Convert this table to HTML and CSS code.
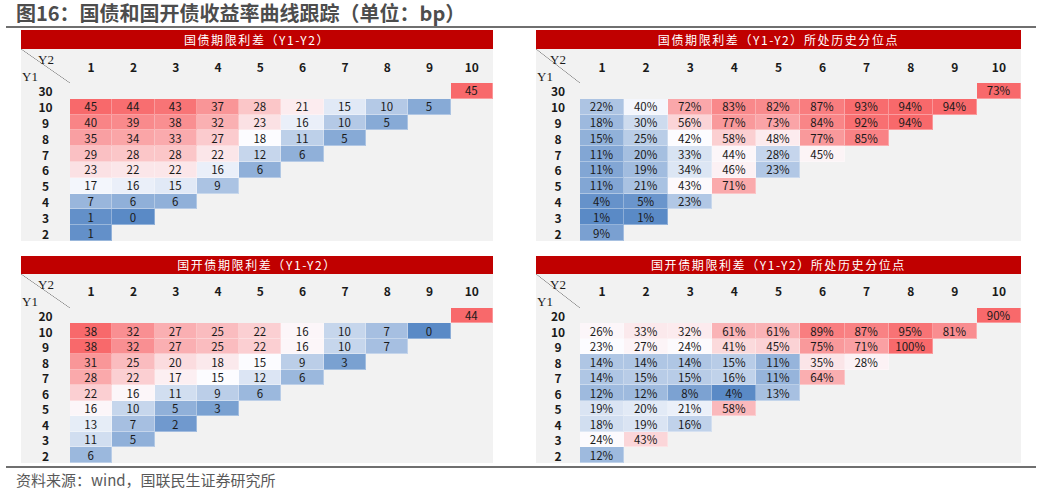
FILE: index.html
```html
<!DOCTYPE html>
<html lang="zh-CN">
<head>
<meta charset="utf-8">
<title>图16：国债和国开债收益率曲线跟踪</title>
<link rel="stylesheet" href="styles.css">
</head>
<body>
<header class="fig-title"><h1>图16：国债和国开债收益率曲线跟踪（单位：bp）</h1></header>
<main class="panels">
  <section class="panel panel-top panel-l">
    <div class="panel-head">国债期限利差（Y1-Y2）</div>
    <div class="grid">
      <div class="corner"><span class="y2">Y2</span><span class="y1">Y1</span></div>
      <div class="ch">1</div><div class="ch">2</div><div class="ch">3</div><div class="ch">4</div><div class="ch">5</div><div class="ch">6</div><div class="ch">7</div><div class="ch">8</div><div class="ch">9</div><div class="ch">10</div>
      <div class="rl">30</div><div class="c c10">45</div>
      <div class="rl">10</div><div class="c">45</div><div class="c">44</div><div class="c">43</div><div class="c">37</div><div class="c">28</div><div class="c">21</div><div class="c">15</div><div class="c">10</div><div class="c">5</div>
      <div class="rl">9</div><div class="c">40</div><div class="c">39</div><div class="c">38</div><div class="c">32</div><div class="c">23</div><div class="c">16</div><div class="c">10</div><div class="c">5</div>
      <div class="rl">8</div><div class="c">35</div><div class="c">34</div><div class="c">33</div><div class="c">27</div><div class="c">18</div><div class="c">11</div><div class="c">5</div>
      <div class="rl">7</div><div class="c">29</div><div class="c">28</div><div class="c">28</div><div class="c">22</div><div class="c">12</div><div class="c">6</div>
      <div class="rl">6</div><div class="c">23</div><div class="c">22</div><div class="c">22</div><div class="c">16</div><div class="c">6</div>
      <div class="rl">5</div><div class="c">17</div><div class="c">16</div><div class="c">15</div><div class="c">9</div>
      <div class="rl">4</div><div class="c">7</div><div class="c">6</div><div class="c">6</div>
      <div class="rl">3</div><div class="c">1</div><div class="c">0</div>
      <div class="rl">2</div><div class="c">1</div>
    </div>
  </section>

  <section class="panel panel-top panel-r">
    <div class="panel-head">国债期限利差（Y1-Y2）所处历史分位点</div>
    <div class="grid">
      <div class="corner"><span class="y2">Y2</span><span class="y1">Y1</span></div>
      <div class="ch">1</div><div class="ch">2</div><div class="ch">3</div><div class="ch">4</div><div class="ch">5</div><div class="ch">6</div><div class="ch">7</div><div class="ch">8</div><div class="ch">9</div><div class="ch">10</div>
      <div class="rl">30</div><div class="c c10">73%</div>
      <div class="rl">10</div><div class="c">22%</div><div class="c">40%</div><div class="c">72%</div><div class="c">83%</div><div class="c">82%</div><div class="c">87%</div><div class="c">93%</div><div class="c">94%</div><div class="c">94%</div>
      <div class="rl">9</div><div class="c">18%</div><div class="c">30%</div><div class="c">56%</div><div class="c">77%</div><div class="c">73%</div><div class="c">84%</div><div class="c">92%</div><div class="c">94%</div>
      <div class="rl">8</div><div class="c">15%</div><div class="c">25%</div><div class="c">42%</div><div class="c">58%</div><div class="c">48%</div><div class="c">77%</div><div class="c">85%</div>
      <div class="rl">7</div><div class="c">11%</div><div class="c">20%</div><div class="c">33%</div><div class="c">44%</div><div class="c">28%</div><div class="c">45%</div>
      <div class="rl">6</div><div class="c">11%</div><div class="c">19%</div><div class="c">34%</div><div class="c">46%</div><div class="c">23%</div>
      <div class="rl">5</div><div class="c">11%</div><div class="c">21%</div><div class="c">43%</div><div class="c">71%</div>
      <div class="rl">4</div><div class="c">4%</div><div class="c">5%</div><div class="c">23%</div>
      <div class="rl">3</div><div class="c">1%</div><div class="c">1%</div>
      <div class="rl">2</div><div class="c">9%</div>
    </div>
  </section>

  <section class="panel panel-bot panel-l">
    <div class="panel-head">国开债期限利差（Y1-Y2）</div>
    <div class="grid">
      <div class="corner"><span class="y2">Y2</span><span class="y1">Y1</span></div>
      <div class="ch">1</div><div class="ch">2</div><div class="ch">3</div><div class="ch">4</div><div class="ch">5</div><div class="ch">6</div><div class="ch">7</div><div class="ch">8</div><div class="ch">9</div><div class="ch">10</div>
      <div class="rl">20</div><div class="c c10">44</div>
      <div class="rl">10</div><div class="c">38</div><div class="c">32</div><div class="c">27</div><div class="c">25</div><div class="c">22</div><div class="c">16</div><div class="c">10</div><div class="c">7</div><div class="c">0</div>
      <div class="rl">9</div><div class="c">38</div><div class="c">32</div><div class="c">27</div><div class="c">25</div><div class="c">22</div><div class="c">16</div><div class="c">10</div><div class="c">7</div>
      <div class="rl">8</div><div class="c">31</div><div class="c">25</div><div class="c">20</div><div class="c">18</div><div class="c">15</div><div class="c">9</div><div class="c">3</div>
      <div class="rl">7</div><div class="c">28</div><div class="c">22</div><div class="c">17</div><div class="c">15</div><div class="c">12</div><div class="c">6</div>
      <div class="rl">6</div><div class="c">22</div><div class="c">16</div><div class="c">11</div><div class="c">9</div><div class="c">6</div>
      <div class="rl">5</div><div class="c">16</div><div class="c">10</div><div class="c">5</div><div class="c">3</div>
      <div class="rl">4</div><div class="c">13</div><div class="c">7</div><div class="c">2</div>
      <div class="rl">3</div><div class="c">11</div><div class="c">5</div>
      <div class="rl">2</div><div class="c">6</div>
    </div>
  </section>

  <section class="panel panel-bot panel-r">
    <div class="panel-head">国开债期限利差（Y1-Y2）所处历史分位点</div>
    <div class="grid">
      <div class="corner"><span class="y2">Y2</span><span class="y1">Y1</span></div>
      <div class="ch">1</div><div class="ch">2</div><div class="ch">3</div><div class="ch">4</div><div class="ch">5</div><div class="ch">6</div><div class="ch">7</div><div class="ch">8</div><div class="ch">9</div><div class="ch">10</div>
      <div class="rl">20</div><div class="c c10">90%</div>
      <div class="rl">10</div><div class="c">26%</div><div class="c">33%</div><div class="c">32%</div><div class="c">61%</div><div class="c">61%</div><div class="c">89%</div><div class="c">87%</div><div class="c">95%</div><div class="c">81%</div>
      <div class="rl">9</div><div class="c">23%</div><div class="c">27%</div><div class="c">24%</div><div class="c">41%</div><div class="c">45%</div><div class="c">75%</div><div class="c">71%</div><div class="c">100%</div>
      <div class="rl">8</div><div class="c">14%</div><div class="c">14%</div><div class="c">14%</div><div class="c">15%</div><div class="c">11%</div><div class="c">35%</div><div class="c">28%</div>
      <div class="rl">7</div><div class="c">14%</div><div class="c">15%</div><div class="c">15%</div><div class="c">16%</div><div class="c">11%</div><div class="c">64%</div>
      <div class="rl">6</div><div class="c">12%</div><div class="c">12%</div><div class="c">8%</div><div class="c">4%</div><div class="c">13%</div>
      <div class="rl">5</div><div class="c">19%</div><div class="c">20%</div><div class="c">21%</div><div class="c">58%</div>
      <div class="rl">4</div><div class="c">18%</div><div class="c">19%</div><div class="c">16%</div>
      <div class="rl">3</div><div class="c">24%</div><div class="c">43%</div>
      <div class="rl">2</div><div class="c">12%</div>
    </div>
  </section>
</main>
<footer class="source">资料来源：wind，国联民生证券研究所</footer>
<script src="script.js"></script>
</body>
</html>
```

FILE: styles.css
```css
* { box-sizing: border-box; }
html, body { margin: 0; padding: 0; background: #fff; }
body {
  width: 1049px;
  font-family: "Noto Sans CJK SC", "Noto Sans", sans-serif;
  color: #1a1a1a;
}
.fig-title {
  margin: 0 13px 0 6px;
  border-bottom: 2px solid #6f6f6f;
  height: 28px;
}
.fig-title h1 {
  margin: 0;
  padding-left: 10px;
  font-size: 20px;
  line-height: 26px;
  font-weight: 700;
  color: #4d4d4d;
  letter-spacing: 0;
}
.panels {
  display: grid;
  grid-template-columns: 472px 485px;
  column-gap: 43px;
  row-gap: 15px;
  padding-left: 21px;
  margin-top: 2px;
}
.panel { background: #f2f2f2; }
.panel-head {
  background: #c00000;
  color: #fff;
  text-align: center;
  font-size: 12px;
  letter-spacing: 1.6px;
  display: flex;
  align-items: center;
  justify-content: center;
}
.panel-top .panel-head { height: 19px; }
.panel-bot .panel-head { height: 18px; }
.grid { display: grid; }
.panel-l .grid { grid-template-columns: 49px repeat(10, 1fr); }
.panel-r .grid { grid-template-columns: 44px repeat(10, 1fr); }
.panel-top .grid { grid-template-rows: 34px repeat(10, 15.8px); }
.panel-bot .grid { grid-template-rows: 34px repeat(10, 15.5px); }
.corner {
  grid-column: 1;
  display: flex;
  flex-direction: column;
  font-family: "Liberation Serif", "DejaVu Serif", serif;
  font-size: 13px;
  line-height: 14px;
  color: #1a1a1a;
  background: linear-gradient(to top right, transparent calc(50% - 0.6px), #8a8a8a 50%, transparent calc(50% + 0.6px));
}
.corner .y2 { padding: 4px 0 0 17px; }
.corner .y1 { padding: 3px 0 0 1px; }
.panel-r .corner .y2 { padding-left: 14px; }
.ch, .rl {
  display: flex;
  align-items: center;
  justify-content: center;
  font-size: 12px;
  font-weight: 700;
  color: #1a1a1a;
}
.rl { grid-column: 1; }
.c {
  display: flex;
  align-items: center;
  justify-content: center;
  font-size: 11.5px;
  color: #1a1a1a;
  border-right: 1px solid rgba(255,255,255,0.3);
  border-bottom: 1px solid rgba(255,255,255,0.35);
}
.c10 { grid-column: 11; background-color: #f8696b; }
.source {
  margin: 3px 13px 0 6px;
  border-top: 2px solid #6f6f6f;
  padding-left: 10px;
  font-size: 15px;
  line-height: 24px;
  color: #595959;
}
```

FILE: script.js
```js
document.querySelectorAll('.grid').forEach(function (g) {
  var cells = Array.prototype.slice.call(g.querySelectorAll('.c:not(.c10)'));
  var vals = cells.map(function (c) { return parseFloat(c.textContent); });
  var s = vals.slice().sort(function (a, b) { return a - b; });
  var n = s.length;
  var r = 0.5 * (n - 1);
  var lo = Math.floor(r), hi = Math.ceil(r);
  var mid = s[lo] + (s[hi] - s[lo]) * (r - lo);
  var min = s[0], max = s[n - 1];
  var B = [90, 138, 198], W = [252, 252, 255], R = [248, 105, 107];
  cells.forEach(function (c, i) {
    var v = vals[i], a, b, t;
    if (v <= mid) { a = B; b = W; t = mid === min ? 1 : (v - min) / (mid - min); }
    else { a = W; b = R; t = (v - mid) / (max - mid); }
    var col = a.map(function (x, k) { return Math.round(x + (b[k] - x) * t); });
    c.style.backgroundColor = 'rgb(' + col.join(',') + ')';
  });
});
```
